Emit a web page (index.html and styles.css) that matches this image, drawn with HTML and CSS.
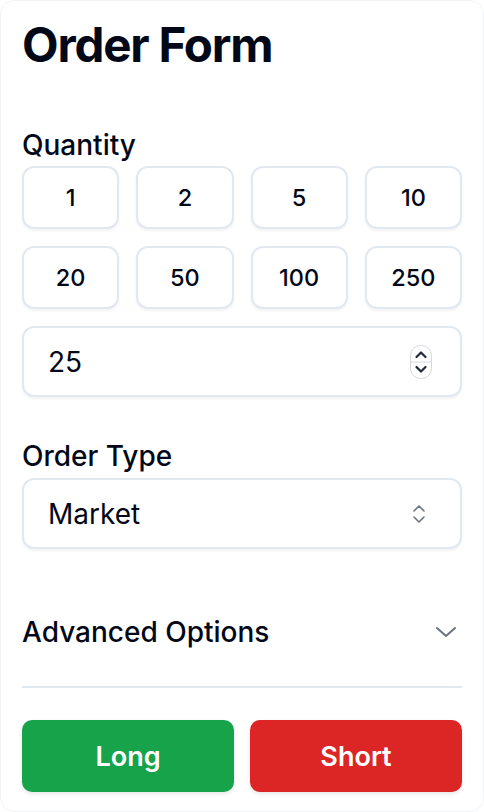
FILE: index.html
```html
<!DOCTYPE html>
<html lang="en">
<head>
<meta charset="utf-8">
<title>Order Form</title>
<link rel="stylesheet" href="styles.css">
</head>
<body>
<div class="card">
  <h1 class="title">Order Form</h1>

  <section class="field qty-field">
    <label class="label">Quantity</label>
    <div class="qty-grid">
      <button class="qty-btn">1</button>
      <button class="qty-btn">2</button>
      <button class="qty-btn">5</button>
      <button class="qty-btn">10</button>
      <button class="qty-btn">20</button>
      <button class="qty-btn">50</button>
      <button class="qty-btn">100</button>
      <button class="qty-btn">250</button>
    </div>
    <div class="input-box">
      <span class="input-value">25</span>
      <span class="spinner">
        <svg width="22" height="34" viewBox="0 0 22 34">
          <rect x="0.5" y="0.5" width="21" height="33" rx="10" fill="#fff" stroke="#d4d8de"/>
          <line x1="1" y1="17" x2="21" y2="17" stroke="#d4d8de"/>
          <path d="M6.5 12 L11 7.5 L15.5 12" fill="none" stroke="#1f2937" stroke-width="2.2" stroke-linecap="round" stroke-linejoin="round"/>
          <path d="M6.5 22 L11 26.5 L15.5 22" fill="none" stroke="#1f2937" stroke-width="2.2" stroke-linecap="round" stroke-linejoin="round"/>
        </svg>
      </span>
    </div>
  </section>

  <section class="field type-field">
    <label class="label">Order Type</label>
    <div class="input-box select-box">
      <span class="input-value">Market</span>
      <svg class="select-icon" width="14" height="20" viewBox="0 0 14 20">
        <path d="M2 7 L7 2 L12 7" fill="none" stroke="#6b7280" stroke-width="1.6" stroke-linecap="round" stroke-linejoin="round"/>
        <path d="M2 13 L7 18 L12 13" fill="none" stroke="#6b7280" stroke-width="1.6" stroke-linecap="round" stroke-linejoin="round"/>
      </svg>
    </div>
  </section>

  <div class="advanced">
    <span class="advanced-label">Advanced Options</span>
    <svg class="chevron" width="22" height="12" viewBox="0 0 22 12">
      <path d="M2 2 L11 10 L20 2" fill="none" stroke="#6b7280" stroke-width="2" stroke-linecap="round" stroke-linejoin="round"/>
    </svg>
  </div>

  <div class="actions">
    <button class="action long">Long</button>
    <button class="action short">Short</button>
  </div>
</div>
</body>
</html>
```

FILE: styles.css
```css
* { box-sizing: border-box; }

html, body {
  margin: 0;
  padding: 0;
  background: #ffffff;
}

body {
  font-family: Inter, "Noto Sans", "Liberation Sans", sans-serif;
  color: #020817;
}

.card {
  min-height: 812px;
  border: 1px solid #f1f3f6;
  border-radius: 14px;
  padding: 18px 21px 0 21px;
  background: #fff;
}

.title {
  margin: 0;
  font-size: 47.5px;
  line-height: 52px;
  font-weight: 700;
  letter-spacing: -0.025em;
  color: #020817;
}

.label {
  display: block;
  font-size: 28px;
  font-weight: 500;
  line-height: 30px;
  color: #020817;
}

.qty-field {
  margin-top: 59px;
}

.qty-grid {
  margin-top: 6px;
  display: grid;
  grid-template-columns: repeat(4, 1fr);
  gap: 17px 17px;
}

.qty-btn {
  height: 63px;
  border: 2px solid #e2e8f0;
  border-radius: 12px;
  background: #fff;
  font-family: inherit;
  font-size: 23.5px;
  font-weight: 500;
  color: #020817;
  box-shadow: 0 2px 3px rgba(15, 23, 42, 0.05);
  padding: 0;
}

.input-box {
  margin-top: 17px;
  height: 71px;
  border: 2px solid #e2e8f0;
  border-radius: 12px;
  background: #fff;
  box-shadow: 0 2px 3px rgba(15, 23, 42, 0.05);
  display: flex;
  align-items: center;
  justify-content: space-between;
  padding: 0 28px 0 24px;
}

.input-value {
  font-size: 28px;
  font-weight: 400;
  color: #020817;
}

.spinner {
  display: flex;
  align-items: center;
}

.type-field {
  margin-top: 44px;
}

.select-box {
  margin-top: 7px;
  padding-right: 34px;
}

.advanced {
  margin-top: 45px;
  padding: 23px 0 39px 0;
  border-bottom: 2px solid #e2e8f0;
  display: flex;
  align-items: center;
  justify-content: space-between;
}

.advanced-label {
  font-size: 28px;
  font-weight: 500;
  line-height: 30px;
  color: #020817;
}

.chevron {
  margin-right: 5px;
}

.actions {
  margin-top: 32px;
  display: grid;
  grid-template-columns: 1fr 1fr;
  gap: 16px;
}

.action {
  height: 72px;
  border: none;
  border-radius: 10px;
  font-family: inherit;
  font-size: 27px;
  font-weight: 600;
  color: #fff;
  box-shadow: 0 2px 4px rgba(15, 23, 42, 0.1);
}

.long { background: #16a34a; }
.short { background: #dc2626; }
```
